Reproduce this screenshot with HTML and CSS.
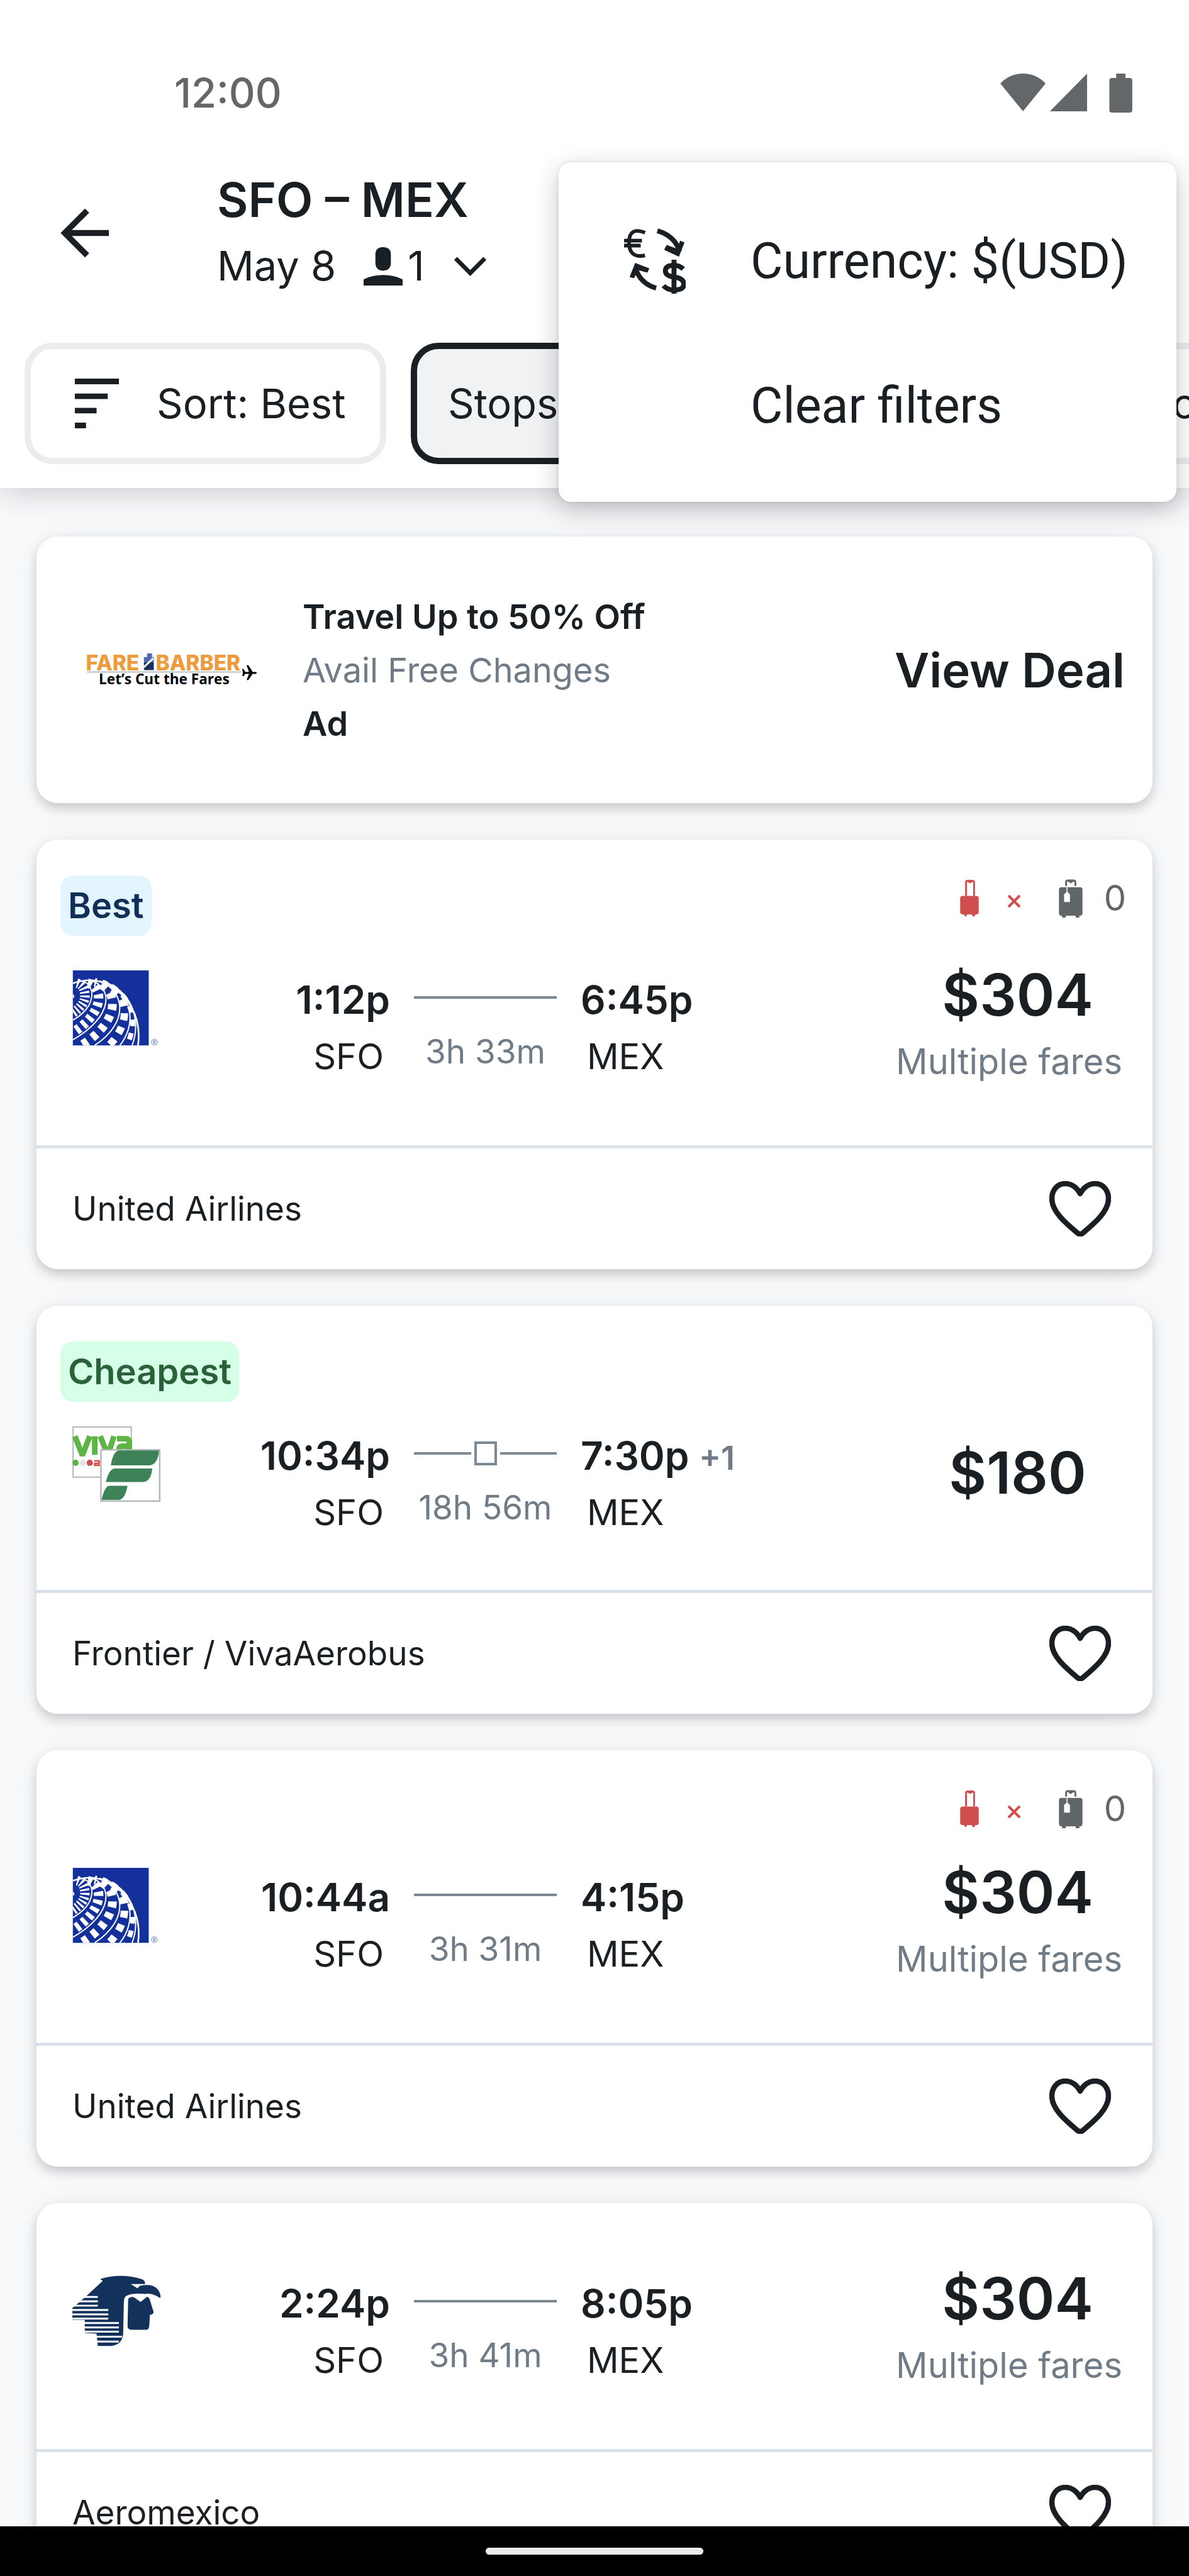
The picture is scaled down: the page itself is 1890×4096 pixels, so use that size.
FILE: index.html
```html
<!DOCTYPE html>
<html lang="en">
<head>
<meta charset="utf-8">
<meta name="viewport" content="width=device-width, initial-scale=1">
<title>SFO – MEX flights</title>
<link rel="stylesheet" href="styles.css">
</head>
<body>
<svg class="defs" aria-hidden="true">
  <symbol id="heart" viewBox="0 0 98 88"><path d="M49 20C43 9 34 4 25.500 4 13 4 4 14 4 28c0 20 21 38 40 54 3.500 3 6.500 3 10 0 19-16 40-34 40-54C94 14 85 4 72.500 4 64 4 55 9 49 20z" fill="none" stroke="#1a1f23" stroke-width="8.500" stroke-linejoin="round"/></symbol>
  <symbol id="carryon" viewBox="0 0 30 59"><path d="M9.500 26V4q0-2.500 2.500-2.500h7.500Q22.500 1.500 22.500 4v22M12 2l4 2 4-2" fill="none" stroke="#d14e4e" stroke-width="3"/><path d="M4 26h22q4 0 4 4v22q0 4-4 4h-1l-2 3h-3l-1-3h-8l-1 3H8l-2-3H4q-4 0-4-4V30q0-4 4-4z" fill="#d14e4e"/></symbol>
  <symbol id="checked" viewBox="0 0 38 62"><path d="M11.500 11V5q0-3 3-3h9q3 0 3 3v6M15 2l4 3 4-3" fill="none" stroke="#616669" stroke-width="3"/><path d="M4 13h30q4 0 4 4v37q0 5-4 5h-1v3h-6v-3H11v3H5v-3H4q-4 0-4-5V17q0-4 4-4z" fill="#616669"/><path d="M13 13v10M9 25l4-4 4 4v11H9z" fill="#fff" stroke="#fff" stroke-width="1.500"/></symbol>
  <symbol id="united" viewBox="0 0 420 364">
    <clipPath id="sq"><path d="M0 0h366v362H0z"/></clipPath>
    <path d="M0 0h366v362H0z" fill="#14309b"/>
    <g clip-path="url(#sq)" fill="none" stroke="#fff">
      <path d="M0 118Q5 124 2 132" stroke-width="8"/>
      <path d="M20 62Q55 70 58 118T0 205" stroke-width="46" stroke-dasharray="9 10"/>
      <path d="M72 62C140 75 165 195 0 300" stroke-width="46" stroke-dasharray="20 19"/>
      <path d="M105 58C220 80 240 240 40 362" stroke-width="42" stroke-dasharray="28 28" stroke-dashoffset="20"/>
      <path d="M140 62C270 110 290 250 165 372" stroke-width="36" stroke-dasharray="34 34" stroke-dashoffset="10"/>
      <path d="M160 62C300 130 315 260 255 372" stroke-width="24" stroke-dasharray="32 34" stroke-dashoffset="36"/>
      <path d="M50 52C110 75 115 175 0 240M90 50C190 80 200 220 0 335M130 50C250 100 275 250 105 362M150 52C290 110 310 260 225 364M170 62C300 120 325 260 285 364" stroke-width="6"/>
      <path d="M0 62C60 42 110 42 160 65 260 110 335 220 314 364" stroke-width="8"/>
    </g>
    <g fill="none" stroke="#8ea0cf" stroke-width="4"><circle cx="393" cy="346" r="14"/><path d="M389 354v-15h5q5 0 5 4t-5 4h-3l8 7"/></g>
  </symbol>
</svg>

<div class="app">
  <header class="top">
    <div class="status">
      <time>12:00</time>
      <svg class="status-icons" viewBox="0 0 214 64" aria-hidden="true"><g fill="#63676a"><path d="M0 16Q15 0 36.500 0T73 16L36.500 61z"/><path d="M140 0v61H80z"/><path d="M187 0h15v7h7q4 0 4 4v48q0 4-4 4h-29q-4 0-4-4V11q0-4 4-4h7z"/></g></svg>
    </div>
    <div class="appbar">
      <button class="back" aria-label="Back"><svg viewBox="0 0 78 78"><path d="M43 3 7 39l36 36M7 39h71" fill="none" stroke="#1a1f23" stroke-width="9.500"/></svg></button>
      <div class="trip">
        <h1>SFO – MEX</h1>
        <button class="details">
          <span>May 8</span>
          <svg class="person" viewBox="0 0 63 62"><path d="M19 12Q19 0 31.500 0T44 12v13Q44 38 31.500 38T19 25zM0 52q14-7 31.500-7T63 52v10H0z" fill="#1a1f23"/></svg>
          <span>1</span>
          <svg class="chev" viewBox="0 0 54 32"><path d="m3 3 24 24L51 3" fill="none" stroke="#1a1f23" stroke-width="7"/></svg>
        </button>
      </div>
    </div>
    <nav class="chips" aria-label="Filters">
      <button class="chip chip-sort"><svg viewBox="0 0 71 80"><path d="M0 0h71v9H0zM0 24h53v9H0zM0 47h35v9H0zM0 71h18v9H0z" fill="#1a1f23"/></svg>Sort: Best</button>
      <button class="chip chip-on">Stops</button>
      <button class="chip">Booking</button>
    </nav>
  </header>

  <main class="list">
    <a class="card ad" href="#">
      <svg class="ad-logo" viewBox="0 0 274 58" role="img" aria-label="Fare Barber">
        <text x="-2" y="29" class="fb-name">FARE</text><text x="111" y="29" class="fb-name">BARBER</text>
        <path d="M97 2h8v6h3v8H92V8h5z" fill="#5068b4"/><path d="M92 16h16v13H92z" fill="#16335f"/><path d="m91 25 16-15" stroke="#fff" stroke-width="3"/>
        <path d="M0 32h249" stroke="#b9c0c4" stroke-width="2"/>
        <text x="19" y="52" class="fb-tag">Let’s Cut the Fares</text>
        <path d="M251 27h2l3 5h6l-4-11h3l7 11h5q3 1 0 3h-5l-7 10h-3l4-10h-6l-3 4h-2l1-6z" fill="#000"/>
      </svg>
      <div class="ad-copy"><strong>Travel Up to 50% Off</strong><span>Avail Free Changes</span><strong>Ad</strong></div>
      <span class="deal">View Deal</span>
    </a>

    <article class="card">
      <div class="main">
        <div class="head"><span class="badge best">Best</span><div class="bags"><svg class="b1"><use href="#carryon"/></svg><svg class="x" viewBox="0 0 22 22"><path d="m2 2 18 18M20 2 2 20" stroke="#d14e4e" stroke-width="4"/></svg><svg class="b2"><use href="#checked"/></svg><span>0</span></div></div>
        <div class="row">
          <svg class="logo" role="img" aria-label="United Airlines"><use href="#united"/></svg>
          <div class="leg dep"><b>1:12p</b><span>SFO</span></div>
          <div class="dur"><i class="line"></i><span>3h 33m</span></div>
          <div class="leg"><b>6:45p</b><span>MEX</span></div>
          <div class="fare"><b>$304</b><span>Multiple fares</span></div>
        </div>
      </div>
      <footer>United Airlines<button class="fav" aria-label="Save"><svg><use href="#heart"/></svg></button></footer>
    </article>

    <article class="card">
      <div class="main single">
        <div class="head"><span class="badge cheap">Cheapest</span></div>
        <div class="row">
          <svg class="logo" viewBox="0 0 142 122" role="img" aria-label="VivaAerobus and Frontier">
            <path d="M1 1h94v81H1z" fill="#fff" stroke="#b0b7bd" stroke-width="2"/>
            <g fill="none" stroke="#5fb446" stroke-width="9"><path d="m4 16 11 28h2l11-28M36 16v30M45 16l11 28h2l9-28M72 20h14q6 0 6 6v20M92 32H80q-5 0-5 5t5 5h10"/></g>
            <circle cx="5" cy="59" r="5" fill="#5fb446"/><circle cx="17" cy="59" r="5" fill="#e2e4e7"/><circle cx="28" cy="59" r="5" fill="#d14e4e"/><path d="M35 56h8v7h-7v-3h7" fill="none" stroke="#d14e4e" stroke-width="2.500"/>
            <path d="M46 38h95v83H46z" fill="#fff" stroke="#b0b7bd" stroke-width="2.500"/>
            <path d="M76 39h64q-2 23-15 24H62q4-24 14-24zM68 68h61q-2 21-15 22H54q5-21 14-22zM59 96h30q-4 22-14 23H47q5-22 12-23z" fill="#3e8258"/>
          </svg>
          <div class="leg dep"><b>10:34p</b><span>SFO</span></div>
          <div class="dur"><i class="line stop"></i><span>18h 56m</span></div>
          <div class="leg"><b>7:30p <small>+1</small></b><span>MEX</span></div>
          <div class="fare"><b>$180</b></div>
        </div>
      </div>
      <footer>Frontier / VivaAerobus<button class="fav" aria-label="Save"><svg><use href="#heart"/></svg></button></footer>
    </article>

    <article class="card">
      <div class="main">
        <div class="head"><div class="bags"><svg class="b1"><use href="#carryon"/></svg><svg class="x" viewBox="0 0 22 22"><path d="m2 2 18 18M20 2 2 20" stroke="#d14e4e" stroke-width="4"/></svg><svg class="b2"><use href="#checked"/></svg><span>0</span></div></div>
        <div class="row">
          <svg class="logo" role="img" aria-label="United Airlines"><use href="#united"/></svg>
          <div class="leg dep"><b>10:44a</b><span>SFO</span></div>
          <div class="dur"><i class="line"></i><span>3h 31m</span></div>
          <div class="leg"><b>4:15p</b><span>MEX</span></div>
          <div class="fare"><b>$304</b><span>Multiple fares</span></div>
        </div>
      </div>
      <footer>United Airlines<button class="fav" aria-label="Save"><svg><use href="#heart"/></svg></button></footer>
    </article>

    <article class="card">
      <div class="main bare">
        <div class="row">
          <svg class="logo" viewBox="0 0 142 116" role="img" aria-label="Aeromexico">
            <path d="M45 5Q78-5 111 5q7 2 6 8H94l11 7 4-4q18-4 27 4 7 7 6 16-14-9-24-7-24-2-32 4-3 3-3 10l-1 49q-1 20-21 21H41L39 93 20 92V71H0V52L20 35 49 8z" fill="#12315b"/>
            <path d="M90 37q5-5 10-2l10 7 10-8q4 0 5 5l6 19q0 4-6 5l-1 18q-1 6-5 6H95q-6-1-6-6z" fill="#12315b"/>
            <path d="M18 34h23M10 41h31M3 48h38M0 55h58M0 62h58M0 69h58M16 76h59M16 83h59M16 90h59M35 98h45M35 106h40" stroke="#fff" stroke-width="3"/>
          </svg>
          <div class="leg dep"><b>2:24p</b><span>SFO</span></div>
          <div class="dur"><i class="line"></i><span>3h 41m</span></div>
          <div class="leg"><b>8:05p</b><span>MEX</span></div>
          <div class="fare"><b>$304</b><span>Multiple fares</span></div>
        </div>
      </div>
      <footer>Aeromexico<button class="fav" aria-label="Save"><svg><use href="#heart"/></svg></button></footer>
    </article>
  </main>

  <div class="homebar"><span></span></div>

  <div class="menu" role="menu">
    <button role="menuitem"><svg viewBox="0 0 100 106" aria-hidden="true"><g fill="none" stroke="#1a1f23"><path d="M34 7Q8-3 8 23t26 21M0 20h29M0 28h27" stroke-width="6"/><path d="M54 4q28 8 36 33" stroke-width="8"/><path d="M19 66q8 24 33 31" stroke-width="8"/><path d="M96 66q-6-6-15-6-14 0-14 9 0 8 14 10 16 2 16 12 0 9-16 9-11 0-17-7M81 51v55" stroke-width="8"/></g><path d="m65 35 24 11 9-23-7-3-5 13-17-6zM9 79l9-23 23 9-3 7-15-4-7 13z" fill="#1a1f23"/></svg>Currency: $(USD)</button>
    <button role="menuitem" class="plain">Clear filters</button>
  </div>
</div>
</body>
</html>
```
FILE: styles.css
```css
:root {
  --ink: #1a1f23;
  --muted: #6f7c87;
  --line: #dae1e9;
  --body: 54px;
  --label: 56px;
}

* { box-sizing: border-box; }

body {
  margin: 0;
  background: #f9fafc;
  color: var(--ink);
  font-family: Inter, "Liberation Sans", sans-serif;
  font-size: var(--body);
}

button {
  margin: 0;
  padding: 0;
  border: 0;
  background: none;
  color: inherit;
  font: inherit;
  text-align: left;
}

svg { display: block; flex: none; }
.defs { position: absolute; width: 0; height: 0; }

.app {
  position: relative;
  display: flex;
  flex-direction: column;
  height: 100vh;
  overflow: hidden;
}

/* Header */
.top {
  position: relative;
  z-index: 1;
  flex: none;
  padding-bottom: 38px;
  background: #fff;
  box-shadow: 0 8px 48px rgba(20, 25, 30, .2);
}

.status {
  display: flex;
  justify-content: space-between;
  align-items: center;
  height: 193px;
  padding: 103px 89px 0 277px;
  color: #63676a;
  font-size: 65px;
  font-weight: 500;
  line-height: 90px;
}
.status-icons { width: 211px; height: 63px; }

.appbar {
  display: flex;
  align-items: center;
  gap: 172px;
  padding: 71px 96px 0;
}
.back svg { width: 77px; height: 77px; }

h1 {
  margin: 0;
  font-size: 76px;
  font-weight: 600;
  line-height: 106px;
}
.details {
  display: flex;
  align-items: center;
  font-size: 65px;
  line-height: 106px;
}
.person { width: 62px; height: 61px; margin: 0 8px 0 44px; }
.chev { width: 53px; height: 31px; margin-left: 46px; }

.chips {
  display: flex;
  gap: 39px;
  margin-top: 69px;
  padding-left: 39px;
  overflow: hidden;
}
.chip {
  display: flex;
  flex: none;
  align-items: center;
  gap: 60px;
  height: 193px;
  padding: 0 49px;
  border: 10px solid #ebeced;
  border-radius: 44px;
  font-size: 65px;
}
.chip-sort { min-width: 575px; padding-left: 70px; }
.chip-sort svg { width: 70px; height: 79px; }
.chip-on {
  width: 1070px;
  border-color: var(--ink);
  background: #f1f2f4;
}

/* Results */
.list {
  display: flex;
  flex: 1;
  flex-direction: column;
  gap: 58px;
  min-height: 0;
  padding: 77px 58px 0;
  overflow: hidden;
}
.card {
  flex: none;
  border-radius: 34px;
  background: #fff;
  box-shadow: 0 8px 16px rgba(20, 25, 30, .18), 0 4px 48px rgba(20, 25, 30, .07);
}

.ad {
  display: flex;
  align-items: center;
  height: 424px;
  padding: 0 44px 0 80px;
  color: inherit;
  text-decoration: none;
}
.ad-logo {
  width: 270px;
  height: 57px;
  margin-right: 73px;
  overflow: visible;
}
.fb-name { font: 800 34px Inter, sans-serif; fill: #ec9c3c; }
.fb-tag { font: 700 23px "Open Sans", sans-serif; fill: #000; }
.ad-copy {
  display: flex;
  flex: 1;
  flex-direction: column;
  line-height: 85px;
}
.ad-copy strong { font-weight: 600; }
.ad-copy span { color: var(--muted); }
.deal { font-size: 76px; font-weight: 600; }

.main {
  display: flex;
  flex-direction: column;
  gap: 36px;
  padding: 57px 42px 85px 38px;
}
.single { gap: 20px; }
.bare { padding-top: 94px; }

.head {
  display: flex;
  justify-content: space-between;
  align-items: flex-start;
  min-height: 75px;
  font-size: var(--label);
}
.badge {
  padding: 0 12px;
  border-radius: 20px;
  font-weight: 600;
  line-height: 96px;
}
.best { background: #e3f6ff; color: #122f58; }
.cheap { background: #d5ffe6; color: #296139; }

.bags {
  display: flex;
  align-items: center;
  height: 72px;
  margin-left: auto;
  color: #616669;
}
.b1 { width: 30px; height: 58px; }
.x { width: 22px; height: 22px; margin: 10px 60px 0 45px; }
.b2 { width: 38px; height: 61px; margin-right: 34px; }

.row {
  display: grid;
  grid-template-columns: 140px 327px 227px 1fr 362px;
  column-gap: 38px;
  padding: 0 5px 0 19px;
}
.logo { width: 140px; height: 120px; margin-top: 19px; }
.leg {
  display: flex;
  flex-direction: column;
  padding-top: 21px;
  font-size: var(--label);
  line-height: 90px;
  white-space: nowrap;
}
.leg b { height: 90px; font-size: 62px; font-weight: 600; }
.leg small { color: var(--muted); font-size: 52px; }
.leg span { padding: 0 10px; }
.dep { text-align: right; }

.dur {
  display: flex;
  flex-direction: column;
  align-items: center;
  padding-top: 21px;
  color: var(--muted);
  font-size: 53px;
  line-height: 90px;
  white-space: nowrap;
}
.line {
  display: flex;
  align-items: center;
  justify-content: center;
  width: 100%;
  height: 82px;
  background: linear-gradient(#7c8892, #7c8892) center / 100% 4px no-repeat;
}
.stop::after {
  content: "";
  width: 28px;
  height: 30px;
  border: 4px solid #7c8892;
  outline: 5px solid #fff;
  background: #fff;
}

.fare {
  display: flex;
  flex-direction: column;
  align-items: center;
  font-size: var(--label);
}
.fare b {
  padding-left: 27px;
  font-size: 92px;
  font-weight: 600;
  line-height: 116px;
}
.fare span { color: var(--muted); line-height: 96px; }
.single .row { height: 194px; }
.single .fare { justify-content: center; height: 186px; }

footer {
  display: flex;
  align-items: center;
  justify-content: space-between;
  height: 197px;
  padding: 0 66px 0 57px;
  border-top: 5px solid var(--line);
  font-size: 53px;
}
.fav svg { width: 98px; height: 88px; }

/* System navigation */
.homebar {
  z-index: 1;
  display: flex;
  flex: none;
  align-items: center;
  justify-content: center;
  height: 79px;
  background: #000;
}
.homebar span {
  width: 346px;
  height: 11px;
  border-radius: 6px;
  background: #ebebed;
}

/* Overflow menu */
.menu {
  position: absolute;
  z-index: 2;
  top: 258px;
  right: 20px;
  width: 982px;
  padding: 42px 0 38px;
  border-radius: 20px;
  background: #fff;
  box-shadow: 0 12px 40px rgba(20, 25, 30, .24), 0 0 8px rgba(20, 25, 30, .08);
}
.menu button {
  display: flex;
  align-items: center;
  gap: 103px;
  width: 100%;
  height: 230px;
  padding-left: 104px;
  font: 79px Roboto, sans-serif;
  white-space: nowrap;
}
.menu svg { width: 98px; height: 104px; }
.menu .plain { padding-left: 305px; }
```
